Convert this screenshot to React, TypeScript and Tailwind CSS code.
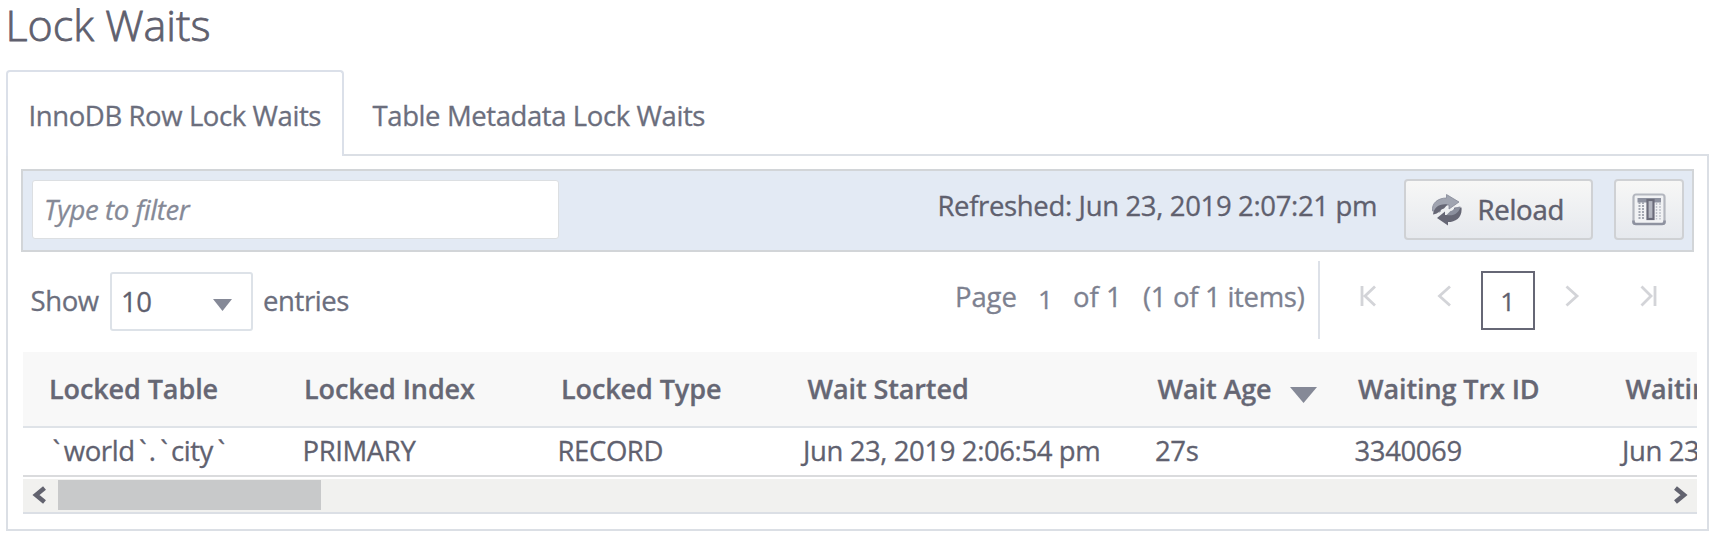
import React from 'react';

const lockedTable = (
  <span className="inline-flex">
    <span>`</span>
    <span className="ml-[4px]">world</span>
    <span className="ml-[4.5px]">`</span>
    <span className="ml-[2.5px]">.</span>
    <span className="ml-[4.5px]">`</span>
    <span className="ml-[3.5px]">city</span>
    <span className="ml-[4.5px]">`</span>
  </span>
);

const columns = [
  { label: 'Locked Table', width: 'w-[255px]', head: 'pl-[26px]', cell: 'pl-[29.5px]', value: lockedTable },
  { label: 'Locked Index', width: 'w-[255px]', head: 'pl-[26px]', cell: 'pl-[24.5px]', value: 'PRIMARY' },
  { label: 'Locked Type', width: 'w-[247px]', head: 'pl-[28px]', cell: 'pl-[24.5px]', value: 'RECORD' },
  { label: 'Wait Started', width: 'w-[350px]', head: 'pl-[27.5px]', cell: 'pl-[23px]', value: 'Jun 23, 2019 2:06:54 pm' },
  { label: 'Wait Age', width: 'w-[200px]', head: 'pl-[27.5px]', cell: 'pl-[25px]', value: '27s', sorted: true },
  { label: 'Waiting Trx ID', width: 'w-[268px]', head: 'pl-[28px]', cell: 'pl-[24.5px]', value: '3340069' },
  { label: 'Waiting Started', width: 'w-[330px]', head: 'pl-[27.5px]', cell: 'pl-[24px]', value: 'Jun 23, 2019 2:06:54 pm' },
];

function ReloadIcon() {
  return (
    <svg width="30" height="32" viewBox="0 0 30 32" className="shrink-0">
      <path d="M0.500 17C-0.500 9 6 4 14.500 4V0.500L27 8 17 15V11C11 10.500 9 14 8 18Z" fill="#a0a4b0" stroke="#858998" strokeWidth="0.800" />
      <path d="M1 20.500C2 13.500 7 9.500 15.500 10.500L12 14.500C8 15 7 20 1 20.500Z" fill="#666775" />
      <path d="M29.500 13.500C30.500 23 24 28 16 28V31.500L5 24 13 17.500V21C19 21.500 21 18 22.500 13.500Z" fill="#666775" />
      <path d="M28.500 12.500C27.500 18.500 22 22.500 14.500 21L18.500 17C22.500 16.500 23 12.500 28.500 12.500Z" fill="#8b8f9d" />
    </svg>
  );
}

function ColumnsIcon() {
  return (
    <svg width="34" height="33" viewBox="0 0 34 33" className="shrink-0">
      <rect x="1.500" y="1.500" width="31" height="29.500" rx="2.500" fill="#f1f2f4" stroke="#b4b7bf" strokeWidth="2.200" />
      <path d="M1.500 27.500V29Q1.500 31 4 31H30Q32.500 31 32.500 29V27.500" fill="none" stroke="#8e92a0" strokeWidth="2.600" />
      <rect x="5.500" y="5" width="23.500" height="4.500" fill="#8e92a0" />
      <path d="M7.500 9V26.500M11 9V26.500" stroke="#a3a7b1" strokeWidth="2" strokeDasharray="2 1" />
      <path d="M24.500 10V26.500M28 10V26.500" stroke="#bfc2ca" strokeWidth="1.500" strokeDasharray="2 1" />
      <rect x="15.500" y="7" width="6" height="19" fill="#b3b6c0" stroke="#6b6c7a" strokeWidth="2.200" />
    </svg>
  );
}

function PagerIcon({ d, className }: { d: string; className: string }) {
  return (
    <svg width="18" height="22" viewBox="0 0 18 22" fill="none" stroke="#d3d4d8" strokeWidth="2.800" className={`mt-[33px] shrink-0 ${className}`}>
      <path d={d} />
    </svg>
  );
}

export default function App() {
  return (
    <div className="h-[537px] w-[1713px] overflow-hidden bg-white font-['Open_Sans',sans-serif] text-[27.5px] leading-[40px] tracking-[-0.4px] whitespace-nowrap text-[#6b6e7d] [-webkit-text-stroke:0.3px_currentColor]">
      <h1 className="h-[70px] pl-[5.5px] text-[43px] leading-[50px] font-light tracking-normal text-[#5f606e] [-webkit-text-stroke:0.8px_currentColor]">Lock Waits</h1>

      <div className="ml-[6px] flex h-[86px] w-[1703px]">
        <div className="w-[338px] rounded-t-[4px] border-x-2 border-t-2 border-[#dbe0e9] pt-[24px] pl-[20.5px]">InnoDB Row Lock Waits</div>
        <div className="flex-1 border-b-2 border-[#dbdfe5] pt-[26px] pl-[28.5px]">Table Metadata Lock Waits</div>
      </div>

      <div className="ml-[6px] h-[375px] w-[1703px] border-x-2 border-b-2 border-[#dbdfe5] pt-[13px]">
        <div className="ml-[13px] flex h-[83px] w-[1673px] items-start border-2 border-[#d2d5d8] bg-[#e3eaf4] text-[#5f606e]">
          <div className="mt-[9px] ml-[9px] h-[59px] w-[527px] rounded-[3px] border border-[#dcdfe2] bg-white pt-[9px] pl-[11px] text-[#858996] italic">Type to filter</div>
          <div className="mt-[15px] ml-[378.5px] w-[466.5px] tracking-[-0.35px]">Refreshed: Jun 23, 2019 2:07:21 pm</div>
          <div className="mt-[8px] flex h-[61px] w-[189px] items-center rounded-[4px] border-2 border-[#cfd1d4] bg-gradient-to-b from-[#f7f7f6] to-[#e6e9ee] pl-[26px]">
            <ReloadIcon />
            <span className="ml-[15.5px] pt-[1px] tracking-[-0.25px] [-webkit-text-stroke:0.5px_currentColor]">Reload</span>
          </div>
          <div className="mt-[8px] ml-[21px] flex h-[61px] w-[70px] items-center justify-center rounded-[4px] border-2 border-[#cfd1d4] bg-gradient-to-b from-[#f7f7f6] to-[#e6e9ee]">
            <ColumnsIcon />
          </div>
        </div>

        <div className="flex h-[100px] items-start">
          <span className="mt-[29px] ml-[22.5px] w-[79.5px]">Show</span>
          <div className="mt-[20px] flex h-[59px] w-[143px] items-start rounded-[3px] border-2 border-[#dde2e8] text-[#5f606e]">
            <span className="mt-[8px] ml-[9px] w-[92px]">10</span>
            <svg width="19" height="12" viewBox="0 0 19 12" className="mt-[25px]"><path d="M0 0H19L9.500 12Z" fill="#858997" /></svg>
          </div>
          <span className="mt-[29px] ml-[10px] w-[692px]">entries</span>
          <span className="mt-[25px] w-[83px] tracking-[-0.1px] text-[#7d8190]">Page</span>
          <span className="mt-[27px] w-[35px] text-[26px] text-[#7d8190]">1</span>
          <span className="mt-[25px] w-[70px] tracking-normal text-[#7d8190]">of 1</span>
          <span className="mt-[25px] w-[175px] tracking-[-0.3px] text-[#7d8190]">(1 of 1 items)</span>
          <div className="mt-[9px] h-[78px] w-[2px] bg-[#dde1e8]" />
          <PagerIcon className="ml-[39px]" d="M3 1V21M16 1.500L6 11 16 20.500" />
          <PagerIcon className="ml-[57px]" d="M16 1.500L5.500 11 16 20.500" />
          <div className="mt-[19px] ml-[28.500px] h-[59px] w-[54px] border-2 border-[#666775] pt-[8px] text-center text-[26px] text-[#5f606e]">1</div>
          <PagerIcon className="ml-[29px]" d="M2.500 1.500L13 11 2.500 20.500" />
          <PagerIcon className="ml-[57px]" d="M2.500 1.500L12 11 2.500 20.500M16 1V21" />
        </div>

        <div className="ml-[15px] w-[1674px] overflow-hidden">
          <table className="w-[1905px] table-fixed border-collapse text-left text-[#60616f]">
            <thead>
              <tr className="h-[75px] border-b-2 border-[#dfe3e8] bg-[#f8f8f8]">
                {columns.map((c) => (
                  <th key={c.label} className={`${c.width} ${c.head} p-0 text-[27px] font-semibold tracking-[-0.1px] text-[#666774]`}>
                    {c.label}
                    {c.sorted && (
                      <svg width="27" height="16" viewBox="0 0 27 16" className="ml-[19px] inline-block align-[-4px]"><path d="M0 0H27L13.500 16Z" fill="#858997" /></svg>
                    )}
                  </th>
                ))}
              </tr>
            </thead>
            <tbody>
              <tr className="h-[49px] border-b-2 border-[#dadbdd]">
                {columns.map((c) => (
                  <td key={c.label} className={`${c.cell} p-0 pb-[2px]`}>
                    {c.value}
                  </td>
                ))}
              </tr>
            </tbody>
          </table>
          <div className="mt-[2px] flex h-[35px] items-center border-b-2 border-[#dbdfe5] bg-[#f1f1ef]">
            <svg width="35" height="31" viewBox="0 0 35 31" fill="none" stroke="#62636f" strokeWidth="4.500"><path d="M21.500 8L13 15 21.500 22" /></svg>
            <div className="mb-[1px] h-[30px] w-[263px] bg-[#c8c9ca]" />
            <svg width="35" height="31" viewBox="0 0 35 31" fill="none" stroke="#62636f" strokeWidth="4.500" className="ml-auto"><path d="M13.500 8L22 15 13.500 22" /></svg>
          </div>
        </div>
      </div>
    </div>
  );
}
